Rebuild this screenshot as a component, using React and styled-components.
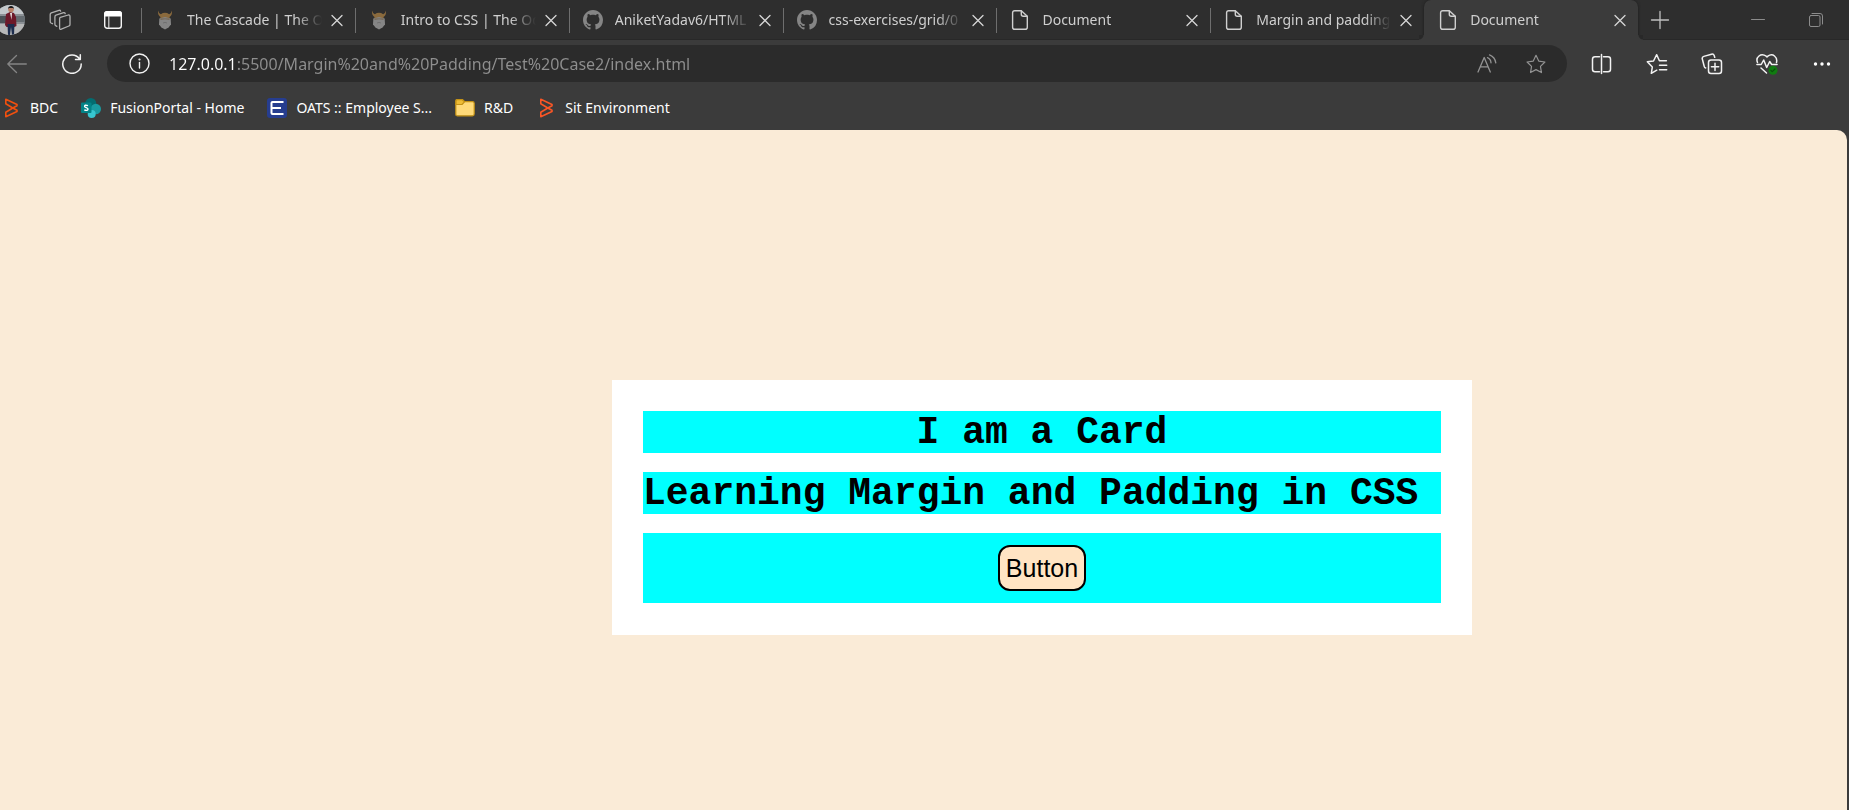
import React from 'react';
import styled, { createGlobalStyle, css } from 'styled-components';

const GlobalStyle = createGlobalStyle`
  * { box-sizing: border-box; }
  body {
    margin: 0;
    background: #3b3b3b;
    font-family: "Noto Sans", "Open Sans", sans-serif;
  }
`;

const Window = styled.div`
  display: flex;
  flex-direction: column;
  min-height: 100vh;
`;

const plainButton = css`
  display: flex;
  align-items: center;
  justify-content: center;
  flex: none;
  padding: 0;
  border: 0;
  background: none;
  color: inherit;
  font: inherit;
`;

const IconButton = styled.button`
  ${plainButton}
  width: ${(p) => p.$width || 20}px;
  color: ${(p) => p.$color || '#f2f2f2'};
`;

/* Tab strip */
const TabStrip = styled.header`
  display: flex;
  align-items: stretch;
  height: 40px;
  background: #2e2e2e;
  box-shadow: inset 0 -1px #282828;
`;

const StripTools = styled.div`
  display: flex;
  align-items: center;
  gap: 32px;
  flex: none;
  width: 141px;
`;

const AvatarButton = styled.button`
  ${plainButton}
  margin-left: -5px;
  margin-right: -8px;
`;

const TabList = styled.nav`
  display: flex;
  flex: 0 1 1497px;
  min-width: 0;
`;

const Tab = styled.div`
  position: relative;
  display: flex;
  align-items: center;
  flex: 1 1 0;
  min-width: 0;
  padding: 0 10px 0 14px;
  color: #cfcfcf;

  ${(p) =>
    p.$active
      ? css`
          background: #3b3b3b;
          border-radius: 7px 7px 0 0;
          box-shadow: 0 0 3px #1c1c1c;
          clip-path: inset(0 -8px 0 -8px);
          &::before,
          &::after {
            content: '';
            position: absolute;
            bottom: 0;
            width: 5px;
            height: 5px;
          }
          &::before {
            right: 100%;
            background: radial-gradient(circle at 0 0, #282828 4px, #3b3b3b 5px);
          }
          &::after {
            left: 100%;
            background: radial-gradient(circle at 100% 0, #282828 4px, #3b3b3b 5px);
          }
        `
      : css`
          background: linear-gradient(#6e6e6e, #6e6e6e) 0 8px / 1px 25px no-repeat;
        `}
`;

const TabButton = styled.button`
  ${plainButton}
  flex: 1;
  min-width: 0;
  gap: 12px;
  justify-content: flex-start;
  margin-right: 7px;
`;

const TabTitle = styled.span`
  flex: 1;
  min-width: 0;
  overflow: hidden;
  text-align: left;
  white-space: nowrap;
  font-size: 14px;
  line-height: 20px;
  mask-image: linear-gradient(to right, #000 calc(100% - 26px), transparent);
`;

const WindowControls = styled.div`
  display: flex;
  align-items: center;
  gap: 44px;
  margin-left: auto;
  padding-right: 26px;
`;

const NewTab = styled(IconButton)`
  margin-left: 12px;
`;

/* Toolbar */
const Toolbar = styled.div`
  display: flex;
  align-items: center;
  height: 47px;
`;

const History = styled.div`
  display: flex;
  gap: 35px;
  padding: 0 25px 0 7px;
`;

const AddressBar = styled.form`
  display: flex;
  align-items: center;
  flex: 1;
  min-width: 0;
  height: 37px;
  padding: 0 21px 0 22px;
  border-radius: 19px;
  background: #2b2b2b;
`;

const AddressInput = styled.input`
  flex: 1;
  min-width: 0;
  margin: 0 28px 0 19px;
  padding: 0;
  border: 0;
  outline: 0;
  background: linear-gradient(90deg, #ffffff 68px, #8f8f8f 68px);
  background-clip: text;
  color: transparent;
  font-family: inherit;
  font-size: 16px;
  line-height: 24px;
`;

const AddressActions = styled.div`
  display: flex;
  gap: 29px;
`;

const ToolbarActions = styled.div`
  display: flex;
  margin-left: 7px;
`;

/* Bookmarks */
const Bookmarks = styled.nav`
  display: flex;
  align-items: center;
  gap: 23px;
  height: 43px;
  padding: 0 0 2px 1px;
`;

const Bookmark = styled.a`
  display: flex;
  align-items: center;
  gap: 9px;
  color: #ffffff;
  font-size: 14px;
  line-height: 20px;
  text-decoration: none;
  white-space: nowrap;
`;

/* Page */
const Page = styled.main`
  display: grid;
  grid-template-columns: 612fr 860fr 375fr;
  align-items: start;
  flex: 1;
  margin-right: 2px;
  padding: 250px 0 32px;
  border-radius: 0 10px 0 0;
  background: #faebd7;
`;

const Card = styled.section`
  grid-column: 2;
  display: flex;
  flex-direction: column;
  gap: 19px;
  padding: 31px 31px 32px;
  background: #ffffff;
`;

const CardLine = styled.h2`
  margin: 0;
  padding-top: 2px;
  background: #00ffff;
  color: #000000;
  font-family: "Liberation Mono", "Courier New", monospace;
  font-size: 38px;
  line-height: 40px;
  text-align: ${(p) => p.$align || 'left'};
  white-space: nowrap;
`;

const CardFooter = styled.div`
  display: flex;
  justify-content: center;
  padding: 12px;
  background: #00ffff;
`;

const CardButton = styled.button`
  height: 46px;
  padding: 0 6px;
  border: 2px solid #000000;
  border-radius: 12px;
  background: #ffe4c4;
  color: #000000;
  font-family: "Liberation Sans", Arial, sans-serif;
  font-size: 25px;
`;

/* Icons */
const Line = ({ size = 22, children, width = 1.3 }) => (
  <svg
    width={size}
    height={size}
    viewBox={`0 0 ${size} ${size}`}
    fill="none"
    stroke="currentColor"
    strokeWidth={width}
    strokeLinecap="round"
    strokeLinejoin="round"
    aria-hidden="true"
  >
    {children}
  </svg>
);

const Avatar = () => (
  <svg width="30" height="30" viewBox="0 0 30 30" aria-hidden="true">
    <clipPath id="avatar"><circle cx="15" cy="15" r="15" /></clipPath>
    <g clipPath="url(#avatar)">
      <rect width="30" height="30" fill="#8b9095" />
      <path d="M0 0h30v9H0z" fill="#c3c8cb" />
      <path d="M0 11h12v7H0z" fill="#4b5257" />
      <path d="M20 11h10v6H20z" fill="#666d72" />
      <path d="M0 19h30v11H0z" fill="#b7b8b8" />
      <path d="M11 9l4-2 4 1 2 4 .5 9-2 1H11.500l-1.500-2z" fill="#6d1829" />
      <path d="M15 8h2l-.5 7z" fill="#e8e3e3" />
      <circle cx="16" cy="4.500" r="2.800" fill="#b98068" />
      <path d="M13 4c0-4 6-4 6 0l-1-1h-4z" fill="#17181b" />
      <path d="M12.500 19h7l-.5 11h-2l-1-8-1 8h-2z" fill="#1c2c4d" />
    </g>
  </svg>
);

const Workspaces = () => (
  <Line>
    <g stroke="#b0b0b0">
      <path d="M11.300 8.400 19.300 6q1.700-.4 1.700 1.400v8q0 1.200-1.100 1.600l-7.600 3.200q-1.700.6-1.700-1.200v-9.200q0-1.100.7-1.400z" />
      <path d="M7.900 17.300 6.700 16.700q-.8-.4-.8-1.400V7.900q0-1.300 1.100-1.700l7.600-2.500q1.300-.3 1.600.9" />
      <path d="M3.500 14.700 2 14q-.8-.4-.8-1.400V5.500q0-1.300 1.100-1.700L10 1.300q1.300-.3 1.600.9" />
    </g>
  </Line>
);

const TabActions = () => (
  <svg width="20" height="20" viewBox="0 0 20 20" aria-hidden="true">
    <rect x="1.700" y="1.700" width="16.600" height="16.600" rx="2.500" fill="none" stroke="#f5f5f5" strokeWidth="1.400" />
    <path d="M1 6.500V4q0-3 3-3h12q3 0 3 3v2.500z" fill="#fff" />
    <path d="M5.800 6v12" stroke="#d5d5d5" strokeWidth="1.200" />
  </svg>
);

const Odin = () => (
  <svg width="20" height="20" viewBox="0 0 20 20" aria-hidden="true">
    <path d="M3 .5q-.3 5 2.500 6.500L5 10h10l-.5-3Q17.300 5.500 17 .5q-.7 3-2.800 3.700Q10 1.500 5.800 4.200 3.700 3.500 3 .5z" fill="#8a6a3d" />
    <path d="M4.300 8.500 10 7l5.700 1.500.3 6-2.500 3L10 19.500l-3.500-2-2.500-3z" fill="#858585" />
    <path d="M5.500 8.500h9v1.200L10 9.200l-4.500.5z" fill="#70604a" />
    <path d="M8 13 10 12.400l2 .6" stroke="#707070" fill="none" />
  </svg>
);

const GitHub = () => (
  <svg width="20" height="20" viewBox="0 0 16 16" fill="#858585" aria-hidden="true">
    <path d="M8 0C3.580 0 0 3.580 0 8c0 3.540 2.290 6.530 5.470 7.590.4.070.55-.17.55-.38 0-.19-.01-.82-.01-1.490-2.010.37-2.530-.49-2.690-.94-.09-.23-.48-.94-.82-1.130-.28-.15-.68-.52-.01-.53.63-.01 1.080.58 1.230.82.720 1.210 1.870.87 2.330.66.070-.52.280-.87.510-1.070-1.780-.2-3.640-.89-3.640-3.950 0-.87.310-1.590.820-2.150-.08-.2-.36-1.020.08-2.120 0 0 .67-.21 2.200.82.640-.18 1.320-.27 2-.27s1.360.09 2 .27c1.530-1.040 2.200-.82 2.200-.82.440 1.100.16 1.920.08 2.120.51.560.82 1.270.82 2.150 0 3.070-1.870 3.750-3.650 3.950.290.25.54.73.54 1.480 0 1.070-.01 1.930-.01 2.200 0 .21.15.46.55.38A8.010 8.010 0 0 0 16 8c0-4.420-3.580-8-8-8z" />
  </svg>
);

const Doc = () => (
  <Line size={20} width={1.4}>
    <path d="M4.700.7h6.600l6 5.600v10.900q0 2.100-2.100 2.100H4.700q-2.100 0-2.100-2.100V2.800Q2.600.7 4.700.7z" />
    <path d="M11.300 1v3.300q0 2 2 2h3.700" />
  </Line>
);

const Close = () => (
  <Line size={16}><path d="M3 3.500l10 10M13 3.500l-10 10" stroke="#d6d6d6" /></Line>
);
const Plus = () => (
  <Line size={20}><path d="M10 1.500v17M1.500 10h17" stroke="#c0c0c0" /></Line>
);
const Minimize = () => (
  <Line size={14} width={1}><path d="M.5 6.500h13" stroke="#8c8c8c" /></Line>
);
const Restore = () => (
  <Line size={14} width={1}>
    <g stroke="#8c8c8c">
      <rect x=".5" y="2.500" width="10.500" height="11" rx="1.500" />
      <path d="M3 .5h8q2.500 0 2.500 2.500v8" />
    </g>
  </Line>
);
const Back = () => (
  <Line size={20}><path d="M19.300 10H.8M9.500 1.500.8 10l8.700 8.500" stroke="#858585" /></Line>
);
const Refresh = () => (
  <Line size={20} width={1.5}><path d="M17.500 4.800a9.200 9.200 0 1 0 1.700 5.200M18.300.8v4.700h-4.800" /></Line>
);
const Info = () => (
  <Line size={21} width={1.4}>
    <circle cx="10.500" cy="10.500" r="9.500" />
    <path d="M10.500 9.500v5.500" />
    <circle cx="10.500" cy="6.500" r=".4" fill="currentColor" />
  </Line>
);
const ReadAloud = () => (
  <Line size={20}>
    <path d="M1 18 7.200 3.500 13.300 18M3.300 12.800h7.800M10.500 3.600q3.300 1.300 3.500 5.200M12.500.9q5.600 2.200 6.300 8" />
  </Line>
);
const Star = () => (
  <Line><path d="M11 1.500l3 6.300 6.800 1-4.900 4.900 1.100 6.700L11 17.200l-6 3.200 1.100-6.700L1.200 8.800l6.800-1z" /></Line>
);
const Split = () => (
  <Line width={1.5}>
    <path d="M8.500 3.700H4q-2.500 0-2.500 2.500v10q0 2.500 2.500 2.500h4.500M12.500 3.700H17q2.500 0 2.500 2.500v10q0 2.500-2.500 2.500h-4.500M10.500 1.500v19" />
  </Line>
);
const Favorites = () => (
  <Line width={1.5}>
    <path d="M5.300 20.300l1-6.200-5-5.300L7.500 8 10.700 1.700 13.400 7.800h7M5.300 20.300l5.500-3.100M13.500 12.200h7.200M13.500 16.700h7.200" />
  </Line>
);
const Collections = () => (
  <Line width={1.5}>
    <rect x="7.500" y="7" width="13" height="13.500" rx="2.500" />
    <path d="M14 10.200v7.300M10.400 13.800h7.300M4.700 14.900Q3.500 14.600 3.200 13.300L1.300 6Q.8 4 2.800 3.400l7.700-2.200q2-.5 2.700 1.400l.5 1.700" />
  </Line>
);
const Heartbeat = () => (
  <Line width={1.5}>
    <path d="M1.500 9.500Q-.2 5.500 3 3t7.200.2L11 4l.8-.8Q15.500.5 18.500 3t2 6.500" />
    <path d="M.9 11.500h4.300L7.700 7l3 7.500 3-6 2 3h5.400M5 15l5.500 5" />
    <circle cx="17" cy="17.300" r="4.500" fill="#107c10" stroke="none" />
    <path d="M14.900 17.400l1.400 1.300 2.700-2.700" stroke="#09500b" strokeWidth="1.200" />
  </Line>
);
const Dots = () => (
  <svg width="20" height="20" viewBox="0 0 20 20" fill="#fff" aria-hidden="true">
    <circle cx="3.500" cy="10" r="1.700" /><circle cx="10" cy="10" r="1.700" /><circle cx="16.500" cy="10" r="1.700" />
  </svg>
);

const Bmc = ({ color }) => (
  <svg width="20" height="20" viewBox="0 0 20 20" fill="none" stroke={color} strokeWidth="1.600" strokeLinejoin="round" aria-hidden="true">
    <path d="M4.800 1.200 16 6.500v1.300L11.800 10 4.800 5.800z" />
    <path d="M4.800 18.800 16 13.500v-1.300L11.800 10l-7 4.200z" />
  </svg>
);
const SharePoint = () => (
  <svg width="20" height="20" viewBox="0 0 20 20" aria-hidden="true">
    <circle cx="9.800" cy="5.500" r="5.500" fill="#036c70" />
    <circle cx="14.800" cy="11" r="5.200" fill="#1a9ba1" />
    <circle cx="10.700" cy="16" r="4" fill="#37c6d0" />
    <rect y="4.500" width="10.500" height="10.500" rx="1" fill="#038387" />
    <path d="M7 7.700Q3.600 6.500 3.600 8.400c0 1.500 3.400 1 3.400 2.700q0 2-3.700.9" fill="none" stroke="#fff" strokeWidth="1.400" />
  </svg>
);
const Oats = () => (
  <svg width="20" height="20" viewBox="0 0 20 20" aria-hidden="true">
    <rect width="20" height="20" rx="3" fill="#263d8f" />
    <path d="M16.500 4H5.500q-1 0-1 1v10q0 1 1 1h11M4.500 10H14" fill="none" stroke="#fff" strokeWidth="2" />
  </svg>
);
const Folder = () => (
  <svg width="20" height="20" viewBox="0 0 20 20" strokeWidth="1.200" strokeLinejoin="round" aria-hidden="true">
    <path d="M.8 17V3q0-1.500 1.500-1.500h5L9.500 3.600h8q1.700 0 1.700 1.700V16q0 1.800-1.800 1.800H2.300Q.8 17.800.8 16z" fill="#ffda79" stroke="#c49216" />
    <path d="M1 6.500h6L9.500 3.800 7.300 1.700h-5Q1 1.700 1 3z" fill="#eebc36" stroke="#c49216" />
  </svg>
);

const tabs = [
  { title: 'The Cascade | The O', Icon: Odin },
  { title: 'Intro to CSS | The Od', Icon: Odin },
  { title: 'AniketYadav6/HTML', Icon: GitHub },
  { title: 'css-exercises/grid/0', Icon: GitHub },
  { title: 'Document', Icon: Doc },
  { title: 'Margin and padding', Icon: Doc },
  { title: 'Document', Icon: Doc, active: true },
];

const bookmarks = [
  { label: 'BDC', icon: <Bmc color="#f1500f" /> },
  { label: 'FusionPortal - Home', icon: <SharePoint /> },
  { label: 'OATS :: Employee S...', icon: <Oats /> },
  { label: 'R&D', icon: <Folder /> },
  { label: 'Sit Environment', icon: <Bmc color="#fa5626" /> },
];

const toolbarActions = [
  ['Split screen', Split],
  ['Favorites', Favorites],
  ['Collections', Collections],
  ['Browser essentials', Heartbeat],
  ['Settings and more', Dots],
];

export default function App() {
  return (
    <Window>
      <GlobalStyle />
      <TabStrip>
        <StripTools>
          <AvatarButton aria-label="Profile"><Avatar /></AvatarButton>
          <IconButton $width={22} aria-label="Workspaces"><Workspaces /></IconButton>
          <IconButton aria-label="Tab actions"><TabActions /></IconButton>
        </StripTools>
        <TabList aria-label="Tabs">
          {tabs.map(({ title, Icon, active }, i) => (
            <Tab key={i} $active={active}>
              <TabButton aria-current={active ? 'page' : undefined}>
                <Icon />
                <TabTitle>{title}</TabTitle>
              </TabButton>
              <IconButton $width={16} aria-label="Close tab"><Close /></IconButton>
            </Tab>
          ))}
        </TabList>
        <NewTab aria-label="New tab"><Plus /></NewTab>
        <WindowControls>
          <IconButton $width={14} aria-label="Minimize"><Minimize /></IconButton>
          <IconButton $width={14} aria-label="Restore"><Restore /></IconButton>
        </WindowControls>
      </TabStrip>

      <Toolbar>
        <History>
          <IconButton aria-label="Back"><Back /></IconButton>
          <IconButton aria-label="Refresh"><Refresh /></IconButton>
        </History>
        <AddressBar onSubmit={(e) => e.preventDefault()}>
          <IconButton type="button" $width={21} aria-label="Site information"><Info /></IconButton>
          <AddressInput
            aria-label="Address"
            spellCheck={false}
            defaultValue="127.0.0.1:5500/Margin%20and%20Padding/Test%20Case2/index.html"
          />
          <AddressActions>
            <IconButton type="button" $color="#939393" aria-label="Read aloud"><ReadAloud /></IconButton>
            <IconButton type="button" $color="#939393" aria-label="Add to favorites"><Star /></IconButton>
          </AddressActions>
        </AddressBar>
        <ToolbarActions>
          {toolbarActions.map(([label, Icon]) => (
            <IconButton key={label} $width={55} aria-label={label}><Icon /></IconButton>
          ))}
        </ToolbarActions>
      </Toolbar>

      <Bookmarks aria-label="Bookmarks">
        {bookmarks.map(({ label, icon }) => (
          <Bookmark key={label} href="#">{icon}{label}</Bookmark>
        ))}
      </Bookmarks>

      <Page>
        <Card>
          <CardLine $align="center">I am a Card</CardLine>
          <CardLine>Learning Margin and Padding in CSS</CardLine>
          <CardFooter><CardButton>Button</CardButton></CardFooter>
        </Card>
      </Page>
    </Window>
  );
}
